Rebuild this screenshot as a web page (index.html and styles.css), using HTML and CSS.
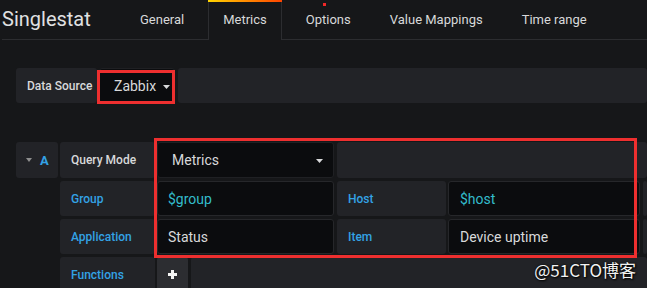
FILE: index.html
```html
<!DOCTYPE html>
<html lang="en">
<head>
  <meta charset="UTF-8" />
  <title>Singlestat</title>
  <link rel="stylesheet" href="styles.css">
</head>
<body>

  <div class="topbar">
    <div class="panel-title">Singlestat</div>
    <div class="tab">General</div>
    <div class="tab active">Metrics</div>
    <div class="tab">Options<span class="dot"></span></div>
    <div class="tab">Value Mappings</div>
    <div class="tab">Time range</div>
  </div>

  <div class="editor">
    <div class="row">
      <div class="label ds-label">Data Source</div>
      <div class="select ds-select">
        Zabbix
        <svg class="caret" width="7" height="4" viewBox="0 0 7 4"><path d="M0 0H7L3.5 4Z" fill="#d8d9da"/></svg>
      </div>
      <div class="filler"></div>
    </div>

    <div class="query">
      <div class="row tall">
        <div class="ref-box">
          <svg width="6" height="4" viewBox="0 0 6 4"><path d="M0 0H6L3 4Z" fill="#8e8e8e"/></svg>
          <span class="ref-id">A</span>
        </div>
        <div class="label plain">Query Mode</div>
        <div class="select wide">
          Metrics
          <svg class="caret push" width="7" height="4" viewBox="0 0 7 4"><path d="M0 0H7L3.5 4Z" fill="#d8d9da"/></svg>
        </div>
        <div class="filler"></div>
      </div>

      <div class="row">
        <div class="spacer"></div>
        <div class="label">Group</div>
        <div class="input wide var">$group</div>
        <div class="label second">Host</div>
        <div class="input right var">$host</div>
        <div class="filler"></div>
      </div>

      <div class="row">
        <div class="spacer"></div>
        <div class="label">Application</div>
        <div class="input wide">Status</div>
        <div class="label second">Item</div>
        <div class="input right">Device uptime</div>
        <div class="filler"></div>
      </div>

      <div class="row">
        <div class="spacer"></div>
        <div class="label">Functions</div>
        <div class="plus-btn">
          <svg width="9" height="9" viewBox="0 0 9 9"><rect x="3" y="0" width="3" height="9" fill="#f4f4f4"/><rect x="0" y="3" width="9" height="3" fill="#f4f4f4"/></svg>
        </div>
        <div class="filler"></div>
      </div>
    </div>
  </div>

  <div class="mark mark-ds"></div>
  <div class="mark mark-query"></div>
  <div class="watermark">@51CTO博客</div>

</body>
</html>
```

FILE: styles.css
```css
* {
  box-sizing: border-box;
  margin: 0;
  padding: 0;
}

body {
  font-family: Roboto, 'Liberation Sans', sans-serif;
  background: #161719;
  color: #d8d9da;
  width: 647px;
  height: 288px;
  overflow: hidden;
  position: relative;
}

.topbar {
  display: flex;
  height: 40px;
  margin-left: 2px;
  border-bottom: 1px solid #2c2d30;
}

.panel-title {
  width: 123px;
  font-size: 20px;
  line-height: 39px;
  color: #e0e1e2;
}

.tab {
  position: relative;
  padding: 0 15px;
  margin-right: 9px;
  font-size: 13px;
  line-height: 40px;
  white-space: nowrap;
}

.tab.active {
  padding: 0 14px;
  height: 40px;
  border-left: 1px solid #2c2d30;
  border-right: 1px solid #2c2d30;
  background: #161719;
}

.tab.active::before {
  content: "";
  position: absolute;
  top: 0;
  left: -1px;
  right: -1px;
  height: 2px;
  background: linear-gradient(to right, #ffd500, #ff4400);
}

.dot {
  position: absolute;
  left: 32px;
  top: 3px;
  width: 3px;
  height: 3px;
  background: #f02828;
}

.editor {
  padding: 28px 0 0 16px;
}

.row {
  display: flex;
  gap: 2px;
  height: 35px;
  margin-bottom: 3px;
}

.row.tall {
  height: 36px;
}

.label {
  width: 95px;
  background: #222327;
  border-radius: 3px;
  padding-left: 11px;
  font-size: 12px;
  font-weight: 500;
  line-height: 36px;
  color: #33a2e5;
}

.label.plain {
  color: #d8d9da;
}

.label.second {
  width: 109px;
  margin-left: 1px;
}

.ds-label {
  width: 81px;
  color: #d8d9da;
}

.select,
.input {
  display: flex;
  align-items: center;
  background: #0b0c0e;
  border: 1px solid #1f2023;
  border-radius: 3px;
  font-size: 14px;
  color: #d8d9da;
}

.ds-select {
  width: 76px;
  padding-left: 14px;
}

.caret {
  margin-left: 7px;
  margin-top: 2px;
}

.caret.push {
  margin-left: auto;
  margin-right: 10px;
}

.wide {
  width: 177px;
}

.select.wide {
  padding-left: 14px;
}

.input {
  padding-left: 10px;
  border-color: #26272a;
}

.input.right {
  width: 192px;
  padding-left: 11px;
}

.var {
  color: #33bccb;
}

.filler {
  flex: 1;
  background: #222327;
  border-radius: 3px;
  margin-left: 1px;
}

.query {
  margin-top: 39px;
}

.ref-box,
.spacer {
  width: 42px;
}

.ref-box {
  display: flex;
  align-items: center;
  gap: 8px;
  padding-left: 10px;
  background: #222327;
  border-radius: 3px;
}

.ref-id {
  font-size: 13px;
  font-weight: 700;
  color: #33a2e5;
}

.plus-btn {
  width: 31px;
  display: flex;
  align-items: center;
  justify-content: center;
  background: #2c2d31;
  border-radius: 3px;
}

.mark {
  position: absolute;
  border: 3px solid #ee2f2f;
}

.mark-ds {
  left: 97px;
  top: 70px;
  width: 78px;
  height: 34px;
}

.mark-query {
  left: 154px;
  top: 138px;
  width: 483px;
  height: 120px;
}

.watermark {
  position: absolute;
  right: 11px;
  bottom: 6px;
  font-family: 'Noto Sans CJK SC', sans-serif;
  font-size: 17px;
  color: #f2f2f2;
  text-shadow: 0 0 2px #000, 1px 1px 2px #000;
}
```
